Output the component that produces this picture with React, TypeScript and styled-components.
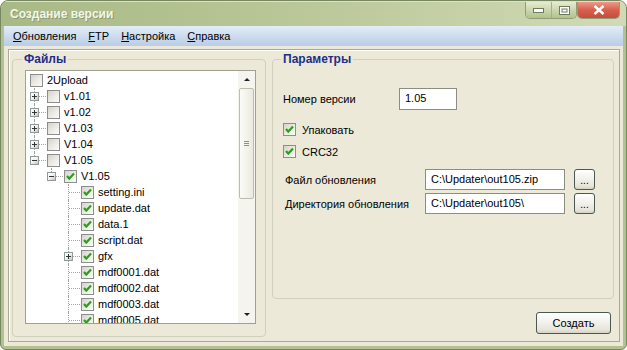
import React, { ReactElement } from 'react';
import styled, { createGlobalStyle } from 'styled-components';

const GlobalStyle = createGlobalStyle`
  html, body {
    margin: 0;
    padding: 0;
    background: #ffffff;
  }
  body {
    font-family: "Liberation Sans", Arial, sans-serif;
    font-size: 11px;
    color: #000000;
  }
`;

const Window = styled.div`
  box-sizing: border-box;
  width: 627px;
  height: 350px;
  display: flex;
  flex-direction: column;
  background: #b2c191;
  border: 1px solid #77875f;
  border-radius: 8px 8px 6px 6px;
  overflow: hidden;
`;

const TitleBar = styled.div`
  height: 26px;
  display: flex;
  align-items: flex-start;
  justify-content: space-between;
  background: linear-gradient(to right, #a9b986 0%, #b9c697 45%, #d1dab6 100%);
  box-shadow: inset 0 1px 0 #dbe3c6;
`;

const Title = styled.div`
  margin: 6px 0 0 9px;
  font-size: 12px;
  font-weight: bold;
  color: #f3f6ea;
  text-shadow: 1px 1px 0 #8e9c70;
`;

const CaptionButtons = styled.div`
  display: flex;
  margin: 1px 6px 0 0;
`;

const CaptionGroup = styled.div`
  display: flex;
  border: 1px solid #8f9f74;
  border-top: none;
  border-radius: 0 0 5px 5px;
  overflow: hidden;
`;

const CaptionButton = styled.div<{ $w: number; $close?: boolean }>`
  width: ${(p) => p.$w}px;
  height: 16px;
  display: flex;
  align-items: center;
  justify-content: center;
  background: ${(p) =>
    p.$close
      ? 'linear-gradient(to bottom, #ec9a88 0%, #d8604f 50%, #c64c3c 100%)'
      : 'linear-gradient(to bottom, #e6ebd4 0%, #c9d4ab 55%, #b3c28f 100%)'};
  & + & {
    border-left: 1px solid #a3b185;
  }
`;

const MenuBar = styled.div`
  height: 20px;
  margin: 0 3px;
  padding-left: 3px;
  display: flex;
  align-items: center;
  background: linear-gradient(to bottom, #e4edf8 0%, #cddcee 50%, #b9cde6 100%);
`;

const MenuItem = styled.span`
  padding: 0 6px;
  line-height: 20px;
  & u {
    text-decoration: underline;
    text-underline-offset: 1px;
  }
`;

const Client = styled.div`
  flex: 1;
  margin: 0 3px 3px;
  padding: 3px 3px 4px 4px;
  background: #ece9d8;
  display: flex;
`;

const Panel = styled.div`
  flex: 1;
  display: flex;
  gap: 6px;
  padding: 2px 4px 4px 3px;
  border: 1px solid #aca899;
  box-shadow: inset 1px 1px 0 #ffffff;
`;

const Group = styled.fieldset<{ $w: number; $h?: number }>`
  box-sizing: border-box;
  width: ${(p) => p.$w}px;
  ${(p) => (p.$h ? `height: ${p.$h}px;` : '')}
  margin: 0;
  padding: 0 9px 12px 12px;
  min-width: 0;
  border: 1px solid #d0d0bf;
  border-radius: 4px;
  display: flex;
  flex-direction: column;
`;

const Legend = styled.legend<{ $shift: number }>`
  margin-left: ${(p) => p.$shift}px;
  padding: 0 2px;
  font-size: 12px;
  font-weight: bold;
  line-height: 14px;
  color: #1d2f8c;
`;

const Tree = styled.div`
  box-sizing: border-box;
  width: 231px;
  height: 254px;
  margin-top: 4px;
  display: flex;
  background: #ffffff;
  border: 1px solid #9f9f94;
`;

const Rows = styled.div`
  flex: 1;
  padding: 1px 0 0 4px;
  overflow: hidden;
`;

const Row = styled.div`
  height: 16px;
  display: flex;
  align-items: center;
  white-space: nowrap;
`;

const Guide = styled.div<{ $line: 'none' | 'full' | 'half'; $branch?: boolean }>`
  position: relative;
  width: 17px;
  height: 16px;
  flex: none;
  &::before {
    content: '';
    position: absolute;
    left: 4px;
    top: 0;
    height: ${(p) => (p.$line === 'full' ? '16px' : p.$line === 'half' ? '8px' : '0')};
    border-left: 1px dotted #a3a3a3;
  }
  &::after {
    content: '';
    display: ${(p) => (p.$branch ? 'block' : 'none')};
    position: absolute;
    left: 5px;
    top: 8px;
    width: 11px;
    border-top: 1px dotted #a3a3a3;
  }
`;

const Expander = styled.span<{ $open: boolean }>`
  position: absolute;
  left: 0;
  top: 4px;
  z-index: 1;
  box-sizing: border-box;
  width: 9px;
  height: 9px;
  border: 1px solid #8f9a9c;
  background: linear-gradient(135deg, #ffffff 0%, #f2f1ea 50%, #c9c6b6 100%);
  &::before {
    content: '';
    position: absolute;
    left: 1px;
    top: 3px;
    width: 5px;
    height: 1px;
    background: #333333;
  }
  &::after {
    content: '';
    display: ${(p) => (p.$open ? 'none' : 'block')};
    position: absolute;
    left: 3px;
    top: 1px;
    width: 1px;
    height: 5px;
    background: #333333;
  }
`;

const Box = styled.span`
  box-sizing: border-box;
  width: 13px;
  height: 13px;
  flex: none;
  display: inline-flex;
  align-items: center;
  justify-content: center;
  border: 1px solid #8e8f8c;
  background: linear-gradient(135deg, #d4d3cb 0%, #ecebe5 55%, #fbfbf8 100%);
`;

const Label = styled.span`
  margin-left: 4px;
`;

const ScrollBar = styled.div`
  width: 17px;
  display: flex;
  flex-direction: column;
  background: #f5f4ee;
`;

const Arrow = styled.div<{ $down?: boolean }>`
  height: 17px;
  display: flex;
  align-items: center;
  justify-content: center;
  &::before {
    content: '';
    border-left: 3px solid transparent;
    border-right: 3px solid transparent;
    ${(p) => (p.$down ? 'border-top: 3px solid #222;' : 'border-bottom: 3px solid #222;')}
  }
`;

const Track = styled.div`
  flex: 1;
`;

const Thumb = styled.div`
  box-sizing: border-box;
  height: 111px;
  margin: 0 1px;
  display: flex;
  align-items: center;
  justify-content: center;
  border: 1px solid #bdbcb0;
  border-radius: 2px;
  background: linear-gradient(to right, #fbfbf8, #ebe9df);
`;

const Grip = styled.div`
  width: 5px;
  height: 5px;
  background: repeating-linear-gradient(to bottom, #8f8f86 0 1px, transparent 1px 2px);
`;

const RightCol = styled.div`
  display: flex;
  flex-direction: column;
`;

const ParamGroup = styled(Group)`
  padding: 0 10px;
`;

const FieldRow = styled.div<{ $top: number }>`
  display: flex;
  align-items: center;
  margin-top: ${(p) => p.$top}px;
`;

const FieldLabel = styled.span<{ $w: number; $pad?: number }>`
  width: ${(p) => p.$w}px;
  padding-left: ${(p) => p.$pad || 0}px;
  box-sizing: border-box;
  flex: none;
`;

const TextBox = styled.div<{ $w: number; $h: number }>`
  box-sizing: border-box;
  width: ${(p) => p.$w}px;
  height: ${(p) => p.$h}px;
  padding: 2px 0 0 5px;
  border: 1px solid #8d8d84;
  background: #ffffff;
  line-height: 14px;
`;

const CheckRow = styled.div<{ $top: number }>`
  display: flex;
  align-items: center;
  height: 13px;
  margin-top: ${(p) => p.$top}px;
  & > span:last-child {
    margin-left: 6px;
  }
`;

const Button = styled.div<{ $w: number; $h: number }>`
  box-sizing: border-box;
  width: ${(p) => p.$w}px;
  height: ${(p) => p.$h}px;
  display: flex;
  align-items: center;
  justify-content: center;
  border: 1px solid #4a5753;
  border-radius: 3px;
  background: linear-gradient(to bottom, #ffffff 0%, #f4f3ee 40%, #e6e4da 85%, #d6d0c5 100%);
  box-shadow: inset 0 -1px 0 #d8d4c8;
`;

const BrowseButton = styled(Button)`
  margin-left: 9px;
  align-items: flex-end;
  padding-bottom: 4px;
  font-size: 10px;
  line-height: 8px;
`;

const ButtonBar = styled.div`
  display: flex;
  justify-content: flex-end;
  margin: 13px 3px 0 0;
`;

type Line = 'none' | 'full' | 'half';

interface Node {
  label: string;
  guides: Line[];
  expander?: 'plus' | 'minus';
  checked: boolean;
}

const leaf: Line[] = ['none', 'none', 'full'];

const nodes: Node[] = [
  { label: '2Upload', guides: [], checked: false },
  { label: 'v1.01', guides: ['full'], expander: 'plus', checked: false },
  { label: 'v1.02', guides: ['full'], expander: 'plus', checked: false },
  { label: 'V1.03', guides: ['full'], expander: 'plus', checked: false },
  { label: 'V1.04', guides: ['full'], expander: 'plus', checked: false },
  { label: 'V1.05', guides: ['half'], expander: 'minus', checked: false },
  { label: 'V1.05', guides: ['none', 'half'], expander: 'minus', checked: true },
  { label: 'setting.ini', guides: leaf, checked: true },
  { label: 'update.dat', guides: leaf, checked: true },
  { label: 'data.1', guides: leaf, checked: true },
  { label: 'script.dat', guides: leaf, checked: true },
  { label: 'gfx', guides: leaf, expander: 'plus', checked: true },
  { label: 'mdf0001.dat', guides: leaf, checked: true },
  { label: 'mdf0002.dat', guides: leaf, checked: true },
  { label: 'mdf0003.dat', guides: leaf, checked: true },
  { label: 'mdf0005.dat', guides: leaf, checked: true },
];

function Check({ checked }: { checked: boolean }): ReactElement {
  return (
    <Box>
      {checked && (
        <svg width="11" height="11" viewBox="0 0 11 11">
          <polyline points="2,5 4.3,7.6 9,2.6" fill="none" stroke="#2aa01e" strokeWidth="2.2" />
        </svg>
      )}
    </Box>
  );
}

function App(): ReactElement {
  return (
    <Window>
      <GlobalStyle />
      <TitleBar>
        <Title>Создание версии</Title>
        <CaptionButtons>
          <CaptionGroup>
            <CaptionButton $w={25}>
              <svg width="11" height="6" viewBox="0 0 11 6">
                <rect x="0.5" y="1.5" width="10" height="4" fill="#ffffff" stroke="#6f7c58" />
              </svg>
            </CaptionButton>
            <CaptionButton $w={24}>
              <svg width="11" height="9" viewBox="0 0 11 9">
                <rect x="0.5" y="0.5" width="10" height="8" fill="#ffffff" stroke="#6f7c58" />
                <rect x="3" y="3" width="5" height="3" fill="none" stroke="#6f7c58" />
              </svg>
            </CaptionButton>
          </CaptionGroup>
          <CaptionGroup>
            <CaptionButton $w={41} $close>
              <svg width="12" height="10" viewBox="0 0 12 10">
                <path d="M1.5 1 L10.5 9 M10.5 1 L1.5 9" stroke="#ffffff" strokeWidth="2.4" />
              </svg>
            </CaptionButton>
          </CaptionGroup>
        </CaptionButtons>
      </TitleBar>

      <MenuBar>
        <MenuItem><u>О</u>бновления</MenuItem>
        <MenuItem><u>F</u>TP</MenuItem>
        <MenuItem><u>Н</u>астройка</MenuItem>
        <MenuItem><u>С</u>правка</MenuItem>
      </MenuBar>

      <Client>
        <Panel>
          <Group $w={254}>
            <Legend $shift={-3}>Файлы</Legend>
            <Tree>
              <Rows>
                {nodes.map((n, i) => (
                  <Row key={i}>
                    {n.guides.map((g, k) => {
                      const last = k === n.guides.length - 1;
                      return (
                        <Guide key={k} $line={g} $branch={last}>
                          {last && n.expander && <Expander $open={n.expander === 'minus'} />}
                        </Guide>
                      );
                    })}
                    <Check checked={n.checked} />
                    <Label>{n.label}</Label>
                  </Row>
                ))}
              </Rows>
              <ScrollBar>
                <Arrow />
                <Track>
                  <Thumb>
                    <Grip />
                  </Thumb>
                </Track>
                <Arrow $down />
              </ScrollBar>
            </Tree>
          </Group>

          <RightCol>
            <ParamGroup $w={342} $h={247}>
              <Legend $shift={-2}>Параметры</Legend>
              <FieldRow $top={22}>
                <FieldLabel $w={116}>Номер версии</FieldLabel>
                <TextBox $w={58} $h={22}>1.05</TextBox>
              </FieldRow>
              <CheckRow $top={13}>
                <Check checked />
                <span>Упаковать</span>
              </CheckRow>
              <CheckRow $top={9}>
                <Check checked />
                <span>CRC32</span>
              </CheckRow>
              <FieldRow $top={11}>
                <FieldLabel $w={142} $pad={2}>Файл обновления</FieldLabel>
                <TextBox $w={140} $h={21}>C:\Updater\out105.zip</TextBox>
                <BrowseButton $w={21} $h={21}>...</BrowseButton>
              </FieldRow>
              <FieldRow $top={3}>
                <FieldLabel $w={142} $pad={2}>Директория обновления</FieldLabel>
                <TextBox $w={140} $h={21}>C:\Updater\out105\</TextBox>
                <BrowseButton $w={21} $h={21}>...</BrowseButton>
              </FieldRow>
            </ParamGroup>
            <ButtonBar>
              <Button $w={75} $h={22}>Создать</Button>
            </ButtonBar>
          </RightCol>
        </Panel>
      </Client>
    </Window>
  );
}

export default App;
